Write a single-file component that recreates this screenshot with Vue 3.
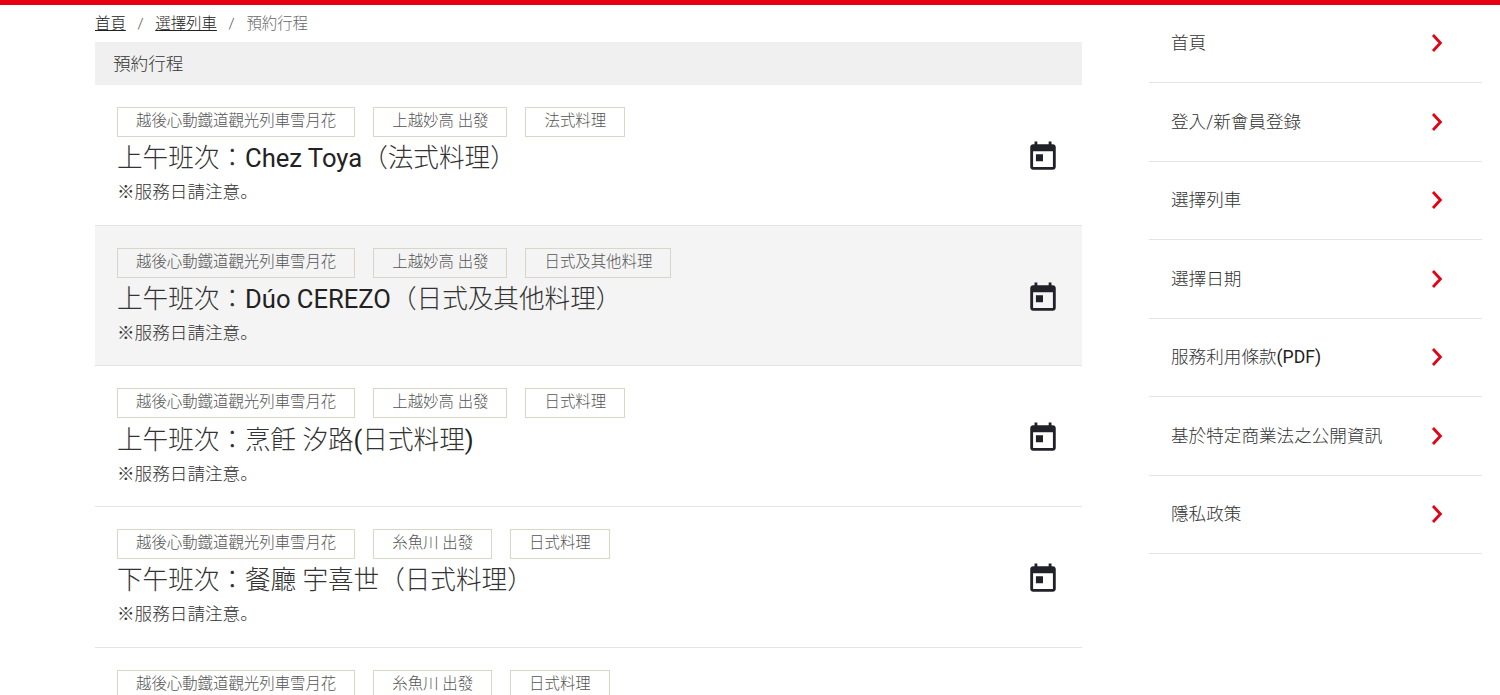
<script setup>
const rows = [
  { tags: ['越後心動鐵道觀光列車雪月花', '上越妙高 出發', '法式料理'], title: [['上午班次：'], ['Chez Toya', 1], ['（法式料理）']] },
  { tags: ['越後心動鐵道觀光列車雪月花', '上越妙高 出發', '日式及其他料理'], title: [['上午班次：'], ['Dúo CEREZO', 1], ['（日式及其他料理）']], hover: true },
  { tags: ['越後心動鐵道觀光列車雪月花', '上越妙高 出發', '日式料理'], title: [['上午班次：烹飪 汐路'], ['(', 1], ['日式料理'], [')', 1]] },
  { tags: ['越後心動鐵道觀光列車雪月花', '糸魚川 出發', '日式料理'], title: [['下午班次：餐廳 宇喜世（日式料理）']] },
  { tags: ['越後心動鐵道觀光列車雪月花', '糸魚川 出發', '日式料理'], title: [['下午班次：餐廳 宇喜世（日式料理）']] },
]
const menu = [['首頁'], ['登入/新會員登錄'], ['選擇列車'], ['選擇日期'], ['服務利用條款', '(PDF)'], ['基於特定商業法之公開資訊'], ['隱私政策']]
</script>

<template>
  <div class="page">
    <main class="main">
      <nav class="crumbs">
        <a>首頁</a><span class="sep">/</span><a>選擇列車</a><span class="sep">/</span><span class="current">預約行程</span>
      </nav>
      <h1 class="heading">預約行程</h1>
      <div class="list">
        <div v-for="(r, i) in rows" :key="i" class="row" :class="{ hover: r.hover }">
          <div class="body">
            <div class="tags"><span v-for="t in r.tags" :key="t" class="tag">{{ t }}</span></div>
            <div class="title"><span v-for="(s, j) in r.title" :key="j" :class="{ latin: s[1] }">{{ s[0] }}</span></div>
            <div class="note">※服務日請注意。</div>
          </div>
          <svg class="cal" viewBox="0 0 24 24" width="34" height="34" aria-hidden="true">
            <path fill="#212129" d="M19 3h-1V1h-2v2H8V1H6v2H5c-1.11 0-2 .9-2 2v14c0 1.1.89 2 2 2h14c1.1 0 2-.9 2-2V5c0-1.1-.9-2-2-2zm0 16H5V8h14v11zM7 10h5v5H7z"/>
          </svg>
        </div>
      </div>
    </main>
    <aside class="side">
      <a v-for="m in menu" :key="m[0]" class="item">
        <span class="label">{{ m[0] }}<span v-if="m[1]" class="latin">{{ m[1] }}</span></span>
        <svg class="chev" viewBox="0 0 12 18" width="12" height="18" aria-hidden="true">
          <path d="M2 1 L9.4 9 L2 17" fill="none" stroke="#e60012" stroke-width="2.8"/>
        </svg>
      </a>
    </aside>
  </div>
</template>

<style>
html, body { margin: 0; height: 695px; overflow: hidden; background: #fff; }
</style>
<style scoped>
.page {
  display: flex;
  border-top: 5px solid #e60012;
  padding-left: 95px;
  height: 690px;
  overflow: hidden;
  font-family: Roboto, "Noto Sans CJK JP", sans-serif;
  color: #333;
  font-weight: 300;
}
.main { width: 987px; flex: none; }
.crumbs {
  height: 37px;
  line-height: 38px;
  font-size: 15.4px;
  color: #666;
}
.crumbs a { color: #222; text-decoration: underline; }
.sep { margin: 0 11.7px; color: #555; }
.heading {
  margin: 0;
  height: 43px;
  line-height: 44px;
  padding-left: 18px;
  background: #f0f0f0;
  font-size: 17.6px;
  font-weight: 300;
  color: #333;
}
.row {
  box-sizing: border-box;
  height: 140.7px;
  padding: 22px 22px 0 22px;
  display: flex;
  justify-content: space-between;
  border-bottom: 1px solid #e4e4e4;
}
.row.hover { background: #f4f4f4; }
.tags { display: flex; gap: 18px; }
.tag {
  height: 30px;
  box-sizing: border-box;
  line-height: 27px;
  padding: 0 18px;
  border: 1px solid #d9d6c9;
  font-size: 15.42px;
  color: #555;
  white-space: nowrap;
}
.title {
  margin-top: 2.4px;
  font-size: 25.6px;
  line-height: 38px;
  color: #333;
  font-weight: 300;
}
.latin { font-weight: 400; color: #222; }
.note {
  font-size: 17.6px;
  line-height: 28px;
  color: #333;
  margin-top: 1px;
}
.cal { margin-top: 33px; flex: none; }
.side { margin: -0.5px 0 0 67px; width: 333px; flex: none; }
.item {
  box-sizing: border-box;
  height: 78.5px;
  display: flex;
  align-items: center;
  justify-content: space-between;
  padding: 0 39px 0 22px;
  border-bottom: 1px solid #e4e4e4;
  font-size: 17.6px;
  color: #333;
}
.label { margin-bottom: 3px; }
</style>
